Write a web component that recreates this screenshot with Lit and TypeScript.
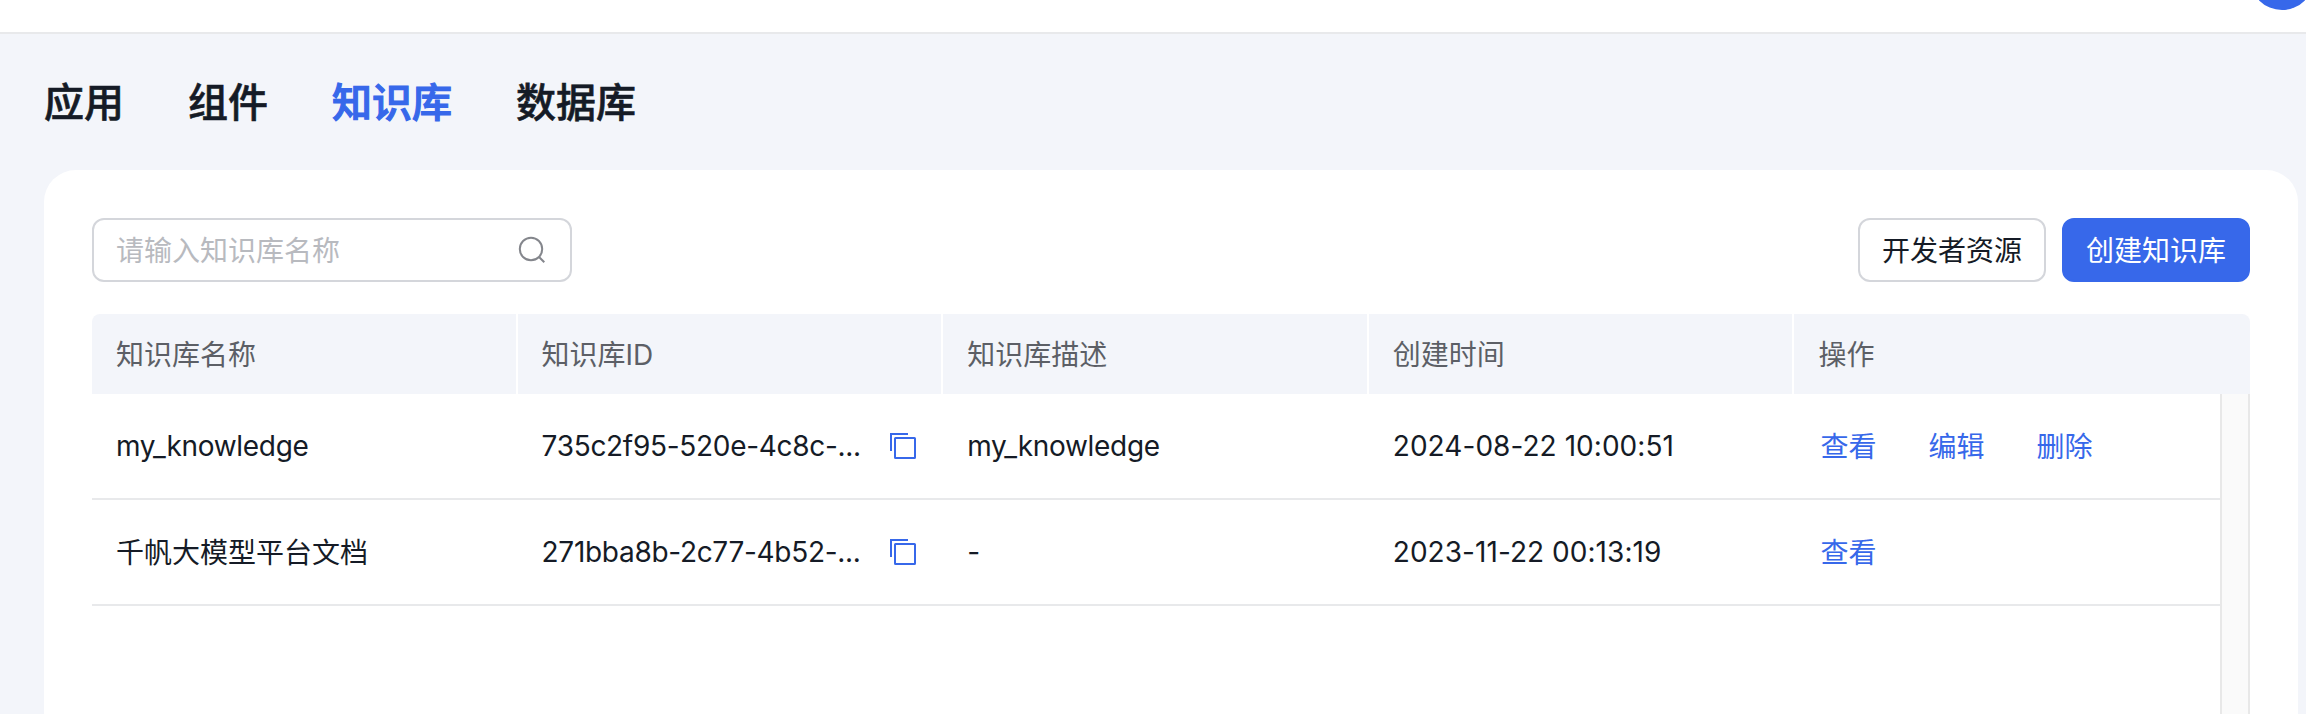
import { LitElement, html, css } from "lit";
import { customElement } from "lit/decorators.js";
import { classMap } from "lit/directives/class-map.js";

interface Row {
  name: string;
  id: string;
  desc: string;
  time: string;
  actions: string[];
}

const TABS = ["应用", "组件", "知识库", "数据库"];
const COLUMNS = ["知识库名称", "知识库ID", "知识库描述", "创建时间", "操作"];
const ROWS: Row[] = [
  { name: "my_knowledge", id: "735c2f95-520e-4c8c-...", desc: "my_knowledge", time: "2024-08-22 10:00:51", actions: ["查看", "编辑", "删除"] },
  { name: "千帆大模型平台文档", id: "271bba8b-2c77-4b52-...", desc: "-", time: "2023-11-22 00:13:19", actions: ["查看"] },
];

const isLatin = (text: string) => /^[\x20-\x7e]+$/.test(text);

@customElement("app-root")
export class AppRoot extends LitElement {
  static styles = css`
    :host {
      display: flex;
      flex-direction: column;
      height: 714px;
      overflow: hidden;
      background: #f3f5fa;
      color: #151b26;
      font: 400 28px/40px Inter, "Noto Sans CJK SC", sans-serif;
    }
    * { box-sizing: border-box; }
    .topbar {
      flex: none;
      position: relative;
      height: 34px;
      background: #fff;
      border-bottom: 2px solid #e8e9eb;
      overflow: hidden;
    }
    .avatar {
      position: absolute;
      right: -8px;
      bottom: 22px;
      width: 64px;
      height: 64px;
      border-radius: 50%;
      background: #3768ea;
    }
    .tabs {
      flex: none;
      display: flex;
      gap: 64px;
      height: 136px;
      padding: 39px 44px 0;
      font-size: 40px;
      line-height: 60px;
      font-weight: 500;
      -webkit-text-stroke: 0.6px currentColor;
    }
    .active {
      color: #3768ea;
      -webkit-text-stroke-width: 1.2px;
    }
    .card {
      flex: 1;
      display: flex;
      flex-direction: column;
      margin: 0 8px 0 44px;
      padding: 48px 48px 0;
      border-radius: 32px 32px 0 0;
      background: #fff;
    }
    .toolbar {
      display: flex;
      gap: 16px;
      height: 64px;
      margin-bottom: 32px;
    }
    .search {
      display: flex;
      align-items: center;
      justify-content: space-between;
      width: 480px;
      margin-right: auto;
      padding: 0 22px;
      border: 2px solid #d4d6db;
      border-radius: 12px;
      color: #b8babf;
    }
    .search span { padding-top: 1px; }
    .search svg { width: 32px; height: 32px; }
    .button {
      display: flex;
      align-items: center;
      justify-content: center;
      width: 188px;
      padding-top: 1px;
      border: 2px solid #d4d6db;
      border-radius: 12px;
    }
    .primary {
      background: #3768ea;
      border-color: #3768ea;
      color: #fff;
    }
    .head {
      display: flex;
      height: 80px;
      background: #f3f5fa;
      border-radius: 8px 8px 0 0;
      color: #5c5f66;
    }
    .cell {
      flex: none;
      display: flex;
      align-items: center;
      width: 425.6px;
      padding: 1px 24px 0;
      white-space: nowrap;
    }
    .head .cell { border-right: 2px solid #fff; }
    .head .cell:last-child { border-right: 0; }
    .body { flex: 1; display: flex; }
    .rows { width: 2128px; }
    .row {
      display: flex;
      height: 106px;
      border-bottom: 2px solid #e8e9eb;
    }
    .row .cell { padding-top: 2px; }
    .latin { letter-spacing: -0.3px; padding-bottom: 2px; }
    .time { padding-bottom: 2px; letter-spacing: 0.05px; }
    .copy { justify-content: space-between; }
    .copy svg { width: 32px; height: 32px; }
    .row .links { gap: 52px; padding-left: 26px; color: #3768ea; }
    .gutter {
      width: 30px;
      background: #fafafa;
      border: solid #e8e8e8;
      border-width: 0 2px;
    }
  `;

  private copyIcon() {
    return html`<svg viewBox="0 0 32 32" fill="none" stroke="#3768ea" stroke-width="2">
      <path d="M4 20V3H21" /><rect x="8" y="7" width="20" height="20" rx="0.5" />
    </svg>`;
  }

  private label(text: string) {
    return html`<span class=${classMap({ latin: isLatin(text) })}>${text}</span>`;
  }

  private row(r: Row) {
    return html`<div class="row">
      <div class="cell">${this.label(r.name)}</div>
      <div class="cell copy">${this.label(r.id)}${this.copyIcon()}</div>
      <div class="cell">${this.label(r.desc)}</div>
      <div class="cell"><span class="time">${r.time}</span></div>
      <div class="cell links">${r.actions.map((a) => html`<span>${a}</span>`)}</div>
    </div>`;
  }

  render() {
    return html`
      <div class="topbar"><div class="avatar"></div></div>
      <nav class="tabs">
        ${TABS.map((t) => html`<span class=${classMap({ active: t === "知识库" })}>${t}</span>`)}
      </nav>
      <main class="card">
        <div class="toolbar">
          <div class="search">
            <span>请输入知识库名称</span>
            <svg viewBox="0 0 32 32" fill="none" stroke="#84868c" stroke-width="2">
              <circle cx="15" cy="15" r="11.2" /><path d="M22.8 22.8L28.3 28.3" />
            </svg>
          </div>
          <div class="button">开发者资源</div>
          <div class="button primary">创建知识库</div>
        </div>
        <div class="head">${COLUMNS.map((c) => html`<div class="cell">${c}</div>`)}</div>
        <div class="body">
          <div class="rows">${ROWS.map((r) => this.row(r))}</div>
          <div class="gutter"></div>
        </div>
      </main>
    `;
  }
}
